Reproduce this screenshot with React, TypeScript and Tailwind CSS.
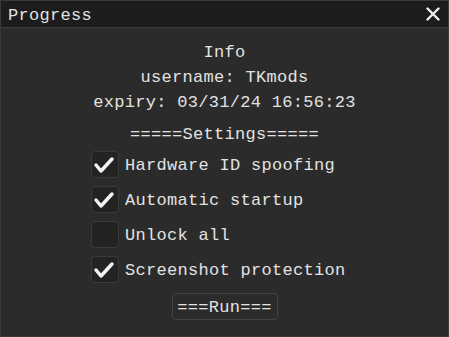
const options = [
  { label: 'Hardware ID spoofing', checked: true },
  { label: 'Automatic startup', checked: true },
  { label: 'Unlock all', checked: false },
  { label: 'Screenshot protection', checked: true },
]

function Check({ checked }: { checked: boolean }) {
  return (
    <div className="w-[28px] h-[27px] shrink-0 rounded-[4px] bg-[#232323] border border-[#3a3a3a]">
      {checked && (
        <svg width="26" height="25" viewBox="0 0 26 25">
          <polyline
            points="4,13 9,19 20,7"
            fill="none"
            stroke="#f2f2f2"
            strokeWidth="3.5"
            strokeLinecap="round"
            strokeLinejoin="round"
          />
        </svg>
      )}
    </div>
  )
}

export default function App() {
  return (
    <div
      className="w-[449px] h-[337px] bg-[#2b2b2b] border border-[#3a3a3a] text-[#e2e2e2] text-[17px] tracking-[0.3px] flex flex-col"
      style={{ fontFamily: '"Liberation Mono", "DejaVu Sans Mono", monospace' }}
    >
      {/* Title bar */}
      <div className="h-[27px] shrink-0 bg-[#1c1c1c] border-b border-[#3d3d3d] flex items-center justify-between pl-[7px] pr-[8px] pt-[2px]">
        <span className="leading-none">Progress</span>
        <svg width="14" height="14" viewBox="0 0 14 14" className="-mt-[2px]">
          <path d="M1.5 1.5 L12.5 12.5 M12.5 1.5 L1.5 12.5" stroke="#f0f0f0" strokeWidth="2.4" strokeLinecap="round" />
        </svg>
      </div>

      {/* Body */}
      <div className="flex flex-col pt-[12px]">
        <div className="flex flex-col items-center leading-[25px]">
          <span>Info</span>
          <span>username: TKmods</span>
          <span>expiry: 03/31/24 16:56:23</span>
          <span className="mt-[7px]">=====Settings=====</span>
        </div>

        <div className="flex flex-col gap-[8px] pl-[90px] mt-[4px]">
          {options.map((o) => (
            <div key={o.label} className="flex items-center gap-[6px] h-[27px]">
              <Check checked={o.checked} />
              <span className="leading-none pt-[2px]">{o.label}</span>
            </div>
          ))}
        </div>

        <div className="flex justify-center mt-[10px]">
          <button className="h-[27px] w-[106px] rounded-[4px] border border-[#444444] bg-[#2b2b2b] leading-none text-[#e2e2e2] pt-[2px]">
            ===Run===
          </button>
        </div>
      </div>
    </div>
  )
}
